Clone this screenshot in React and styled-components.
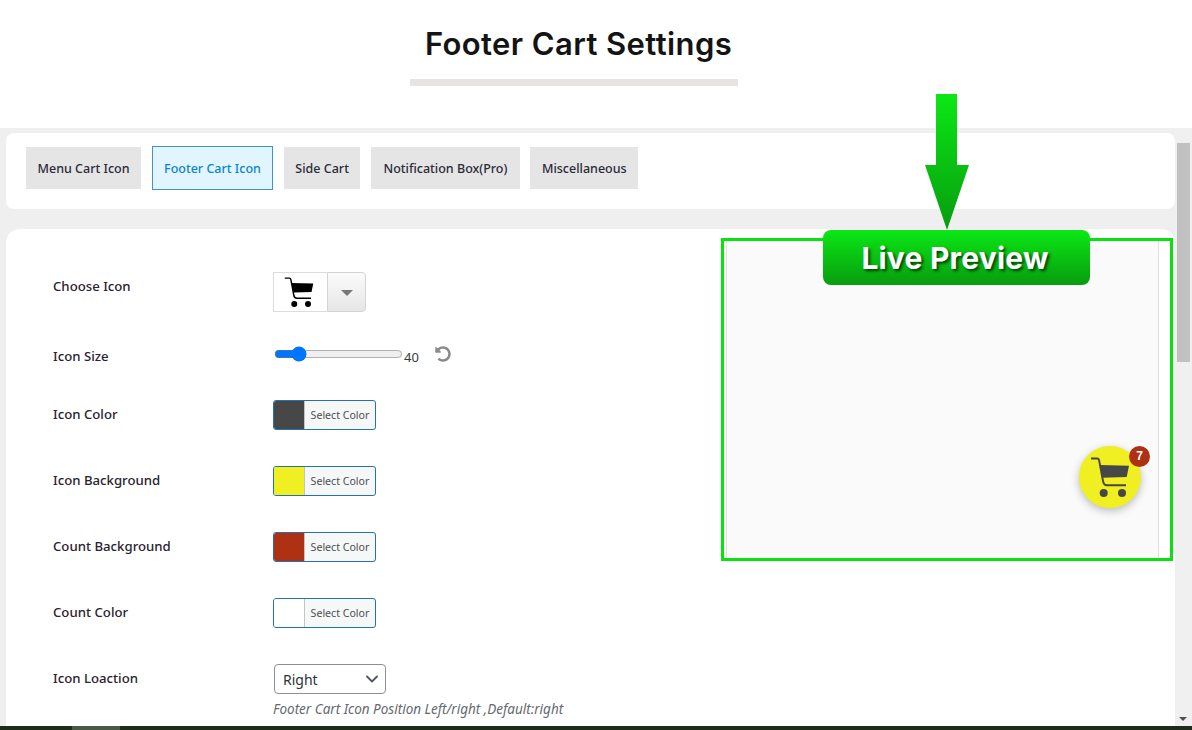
import React from 'react';
import styled, { createGlobalStyle } from 'styled-components';
import { ChevronDown } from 'lucide-react';
import { FaUndoAlt } from 'react-icons/fa';

const GlobalStyle = createGlobalStyle`
  html, body {
    margin: 0;
    padding: 0;
    height: 100%;
    overflow: hidden;
    background: #fff;
    font-family: "Noto Sans", "Open Sans", sans-serif;
  }
`;

const Page = styled.div`
  position: relative;
  width: 1192px;
  height: 730px;
  display: flex;
  flex-direction: column;
  overflow: hidden;
`;

const Header = styled.header`
  height: 128px;
  flex: none;
  box-sizing: border-box;
  padding: 24px 44px 0 0;
  display: flex;
  flex-direction: column;
  align-items: center;
  background: #fff;
`;

const Title = styled.h1`
  margin: 0;
  padding-left: 9px;
  font-family: Inter, "Open Sans", sans-serif;
  font-size: 31px;
  line-height: 40px;
  font-weight: 600;
  letter-spacing: 0.4px;
  color: #141414;
`;

const TitleRule = styled.div`
  width: 328px;
  height: 7px;
  margin-top: 15px;
  background: #e6e5e1;
`;

const Body = styled.div`
  flex: 1;
  min-height: 0;
  display: flex;
  background: #efefef;
`;

const Content = styled.main`
  flex: 1;
  min-width: 0;
  box-sizing: border-box;
  padding: 5px 0 0 6px;
  display: flex;
  flex-direction: column;
  gap: 20px;
  overflow: hidden;
`;

const TabCard = styled.nav`
  flex: none;
  height: 76px;
  box-sizing: border-box;
  padding: 14px 20px 0;
  display: flex;
  align-items: flex-start;
  gap: 10.5px;
  background: #fff;
  border-radius: 8px;
`;

const Tab = styled.div`
  height: ${(p) => (p.$active ? '44px' : '42px')};
  margin-top: ${(p) => (p.$active ? '-1px' : '0')};
  box-sizing: border-box;
  padding: 0 ${(p) => p.$pad}px;
  display: flex;
  align-items: center;
  font-size: 12.5px;
  font-weight: 500;
  color: ${(p) => (p.$active ? '#0b85c6' : '#2a2a38')};
  background: ${(p) => (p.$active ? '#e1f5fe' : '#e5e5e5')};
  border: ${(p) => (p.$active ? '1px solid #3f90dd' : 'none')};
`;

const FormCard = styled.section`
  flex: 1;
  box-sizing: border-box;
  padding: 43px 0 0 47px;
  background: #fff;
  border-radius: 14px 14px 0 0;
`;

const Row = styled.div`
  display: grid;
  grid-template-columns: 220px 1fr;
  margin-bottom: ${(p) => p.$gap}px;
`;

const Label = styled.label`
  font-size: 13.2px;
  font-weight: 500;
  line-height: 18px;
  padding-top: 5px;
  color: #2a2230;
`;

const IconPicker = styled.div`
  display: flex;
  width: 93px;
  height: 40px;
`;

const IconBox = styled.div`
  width: 54px;
  box-sizing: border-box;
  padding-right: 3px;
  border: 1px solid #dcdcdc;
  border-right: none;
  display: flex;
  align-items: center;
  justify-content: center;
`;

const PickerButton = styled.div`
  flex: 1;
  box-sizing: border-box;
  border: 1px solid #d4d4d4;
  border-radius: 0 4px 4px 0;
  background: linear-gradient(#fbfbfb, #e6e6e6);
  display: flex;
  align-items: center;
  justify-content: center;
`;

const Caret = styled.span`
  width: 0;
  height: 0;
  margin-top: 1px;
  border-left: 6px solid transparent;
  border-right: 6px solid transparent;
  border-top: 6px solid #777;
`;

const SliderLine = styled.div`
  display: flex;
  align-items: flex-start;
  height: 30px;
`;

const Range = styled.input`
  width: 129px;
  height: 16px;
  margin: 4px 0 0 1px;
`;

const RangeValue = styled.span`
  font-size: 13px;
  line-height: 18px;
  margin: 6px 0 0 1px;
  color: #3a3a3a;
`;

const ResetButton = styled.span`
  display: flex;
  margin: 4px 0 0 16px;
  color: #8a8a8a;
  font-size: 16px;
`;

const ColorButton = styled.div`
  width: 103px;
  height: 30px;
  box-sizing: border-box;
  border: 1px solid #2271b1;
  border-radius: 3px;
  display: flex;
  overflow: hidden;
  background: #f6f7f7;
`;

const Swatch = styled.span`
  width: 30px;
  flex: none;
  background: ${(p) => p.$color};
`;

const ColorText = styled.span`
  flex: 1;
  border-left: 1px solid #c3c4c7;
  font-size: 10.6px;
  line-height: 28px;
  text-align: center;
  color: #4a5056;
`;

const SelectWrap = styled.div`
  position: relative;
  width: 112px;
  margin-left: 1px;
`;

const Select = styled.select`
  width: 100%;
  height: 30px;
  box-sizing: border-box;
  padding: 0 8px;
  appearance: none;
  background: #fff;
  border: 1px solid #8c8f94;
  border-radius: 4px;
  font-family: "Noto Sans", sans-serif;
  font-size: 14px;
  color: #2c3338;
`;

const SelectChevron = styled(ChevronDown)`
  position: absolute;
  top: 5px;
  right: 4px;
  color: #50575e;
  pointer-events: none;
`;

const Hint = styled.p`
  margin: 6px 0 0;
  font-size: 13.5px;
  font-style: italic;
  line-height: 18px;
  white-space: nowrap;
  color: #646970;
`;

const Scrollbar = styled.aside`
  position: relative;
  width: 17px;
  flex: none;
  background: #f0f0f0;
`;

const ScrollThumb = styled.div`
  position: absolute;
  top: 15px;
  left: 2px;
  width: 13px;
  height: 219px;
  background: #c1c1c1;
`;

const ScrollArrow = styled.span`
  position: absolute;
  bottom: 5px;
  left: 4px;
  width: 0;
  height: 0;
  border-left: 4px solid transparent;
  border-right: 4px solid transparent;
  border-top: 4px solid #505050;
`;

const BottomStrip = styled.div`
  position: relative;
  flex: none;
  height: 4px;
  background: #1f2b1c;
`;

const StripTab = styled.span`
  position: absolute;
  top: 0;
  left: 72px;
  width: 48px;
  height: 4px;
  background: #4a5847;
`;

const PreviewFrame = styled.div`
  position: absolute;
  left: 721px;
  top: 238px;
  width: 452px;
  height: 323px;
  box-sizing: border-box;
  border: 3px solid #08e30f;
  background: #fff;
  padding-left: 2px;
`;

const PreviewPane = styled.div`
  position: relative;
  width: 433px;
  height: 100%;
  box-sizing: border-box;
  background: #fafafa;
  border-left: 1px solid #dedede;
  border-right: 1px solid #dedede;
`;

const Fab = styled.div`
  position: absolute;
  left: 352px;
  top: 205px;
  width: 62px;
  height: 62px;
  border-radius: 50%;
  background: #efef21;
  box-shadow: 0 3px 8px rgba(0, 0, 0, 0.25);
  display: flex;
  align-items: center;
  justify-content: center;
`;

const FabBadge = styled.span`
  position: absolute;
  top: 0;
  right: -9px;
  width: 21px;
  height: 21px;
  border-radius: 50%;
  background: #ad3112;
  color: #fff;
  font-family: "Liberation Sans", sans-serif;
  font-size: 12px;
  font-weight: 700;
  line-height: 21px;
  text-align: center;
`;

const ArrowMark = styled.svg`
  position: absolute;
  left: 925px;
  top: 94px;
`;

const PreviewBadge = styled.div`
  position: absolute;
  left: 823px;
  top: 230px;
  width: 267px;
  height: 55px;
  box-sizing: border-box;
  padding: 1px 3px 0 0;
  border-radius: 8px;
  background: linear-gradient(#0be815, #079c0e);
  display: flex;
  align-items: center;
  justify-content: center;
  font-family: Inter, "Open Sans", sans-serif;
  font-size: 30px;
  font-weight: 700;
  letter-spacing: 0.2px;
  color: #fff;
  text-shadow: 2px 2px 3px #023f05;
`;

const CartIcon = ({ size, color }) => (
  <svg width={size} height={size} viewBox="0 0 40 40" aria-hidden="true">
    <path d="M1 1.5h6.3c1 0 1.5.6 1.8 1.7L13 24c.5 3 1.5 4.3 4 4.3h19" fill="none" stroke={color} strokeWidth="1.9" />
    <path d="M10 8l29 .7-2.3 11.3-24 .7z" fill={color} />
    <circle cx="13.7" cy="36" r="4" fill={color} />
    <circle cx="32" cy="36" r="4" fill={color} />
  </svg>
);

const colorRows = [
  { label: 'Icon Color', color: '#474747' },
  { label: 'Icon Background', color: '#efef21' },
  { label: 'Count Background', color: '#ad3112' },
  { label: 'Count Color', color: '#ffffff' },
];

const tabs = [
  { label: 'Menu Cart Icon', pad: 11.5 },
  { label: 'Footer Cart Icon', pad: 11.5, active: true },
  { label: 'Side Cart', pad: 11.5 },
  { label: 'Notification Box(Pro)', pad: 12.5 },
  { label: 'Miscellaneous', pad: 11.5 },
];

export default function App() {
  return (
    <Page>
      <GlobalStyle />
      <Header>
        <Title>Footer Cart Settings</Title>
        <TitleRule />
      </Header>
      <Body>
        <Content>
          <TabCard>
            {tabs.map((t) => (
              <Tab key={t.label} $active={t.active} $pad={t.pad}>{t.label}</Tab>
            ))}
          </TabCard>
          <FormCard>
            <Row $gap={30}>
              <Label>Choose Icon</Label>
              <IconPicker>
                <IconBox><CartIcon size={30} color="#000" /></IconBox>
                <PickerButton><Caret /></PickerButton>
              </IconPicker>
            </Row>
            <Row $gap={28}>
              <Label>Icon Size</Label>
              <SliderLine>
                <Range type="range" min={25} max={125} defaultValue={40} />
                <RangeValue>40</RangeValue>
                <ResetButton><FaUndoAlt /></ResetButton>
              </SliderLine>
            </Row>
            {colorRows.map((r) => (
              <Row key={r.label} $gap={36}>
                <Label>{r.label}</Label>
                <ColorButton>
                  <Swatch $color={r.color} />
                  <ColorText>Select Color</ColorText>
                </ColorButton>
              </Row>
            ))}
            <Row $gap={0}>
              <Label>Icon Loaction</Label>
              <div>
                <SelectWrap>
                  <Select defaultValue="Right">
                    <option>Right</option>
                    <option>Left</option>
                  </Select>
                  <SelectChevron size={20} strokeWidth={2.2} />
                </SelectWrap>
                <Hint>Footer Cart Icon Position Left/right ,Default:right</Hint>
              </div>
            </Row>
          </FormCard>
        </Content>
        <Scrollbar>
          <ScrollThumb />
          <ScrollArrow />
        </Scrollbar>
      </Body>
      <BottomStrip><StripTab /></BottomStrip>

      <PreviewFrame>
        <PreviewPane>
          <Fab>
            <CartIcon size={40} color="#474747" />
            <FabBadge>7</FabBadge>
          </Fab>
        </PreviewPane>
      </PreviewFrame>
      <ArrowMark width="44" height="136" viewBox="0 0 44 136" aria-hidden="true">
        <defs>
          <linearGradient id="arrowFill" x1="0" y1="0" x2="0" y2="1">
            <stop offset="0" stopColor="#0be815" />
            <stop offset="1" stopColor="#079c0e" />
          </linearGradient>
        </defs>
        <path d="M11 0h21v71h12L22 136 0 71h11z" fill="url(#arrowFill)" />
      </ArrowMark>
      <PreviewBadge>Live Preview</PreviewBadge>
    </Page>
  );
}
